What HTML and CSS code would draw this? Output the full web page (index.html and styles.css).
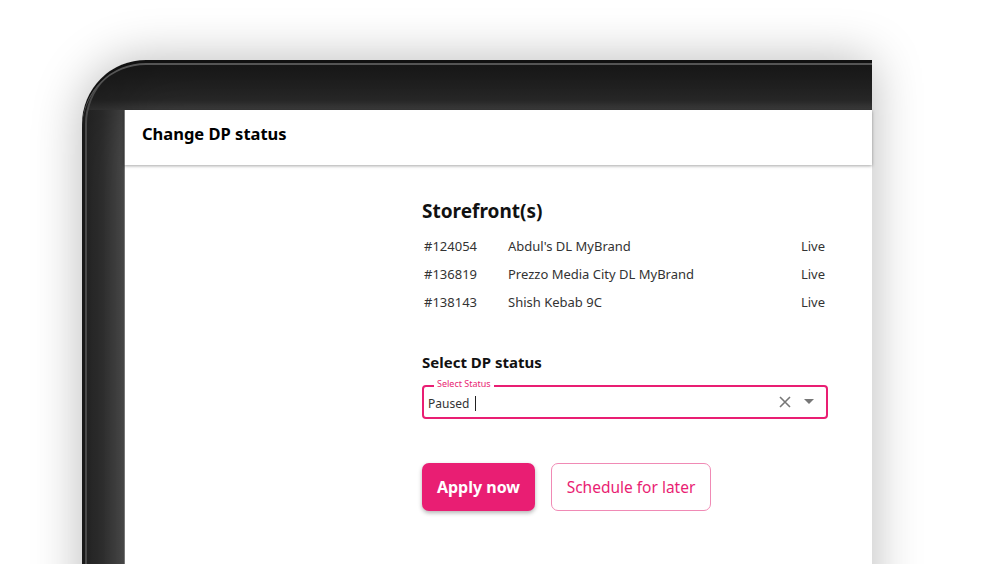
FILE: index.html
```html
<!DOCTYPE html>
<html>
<head>
<meta charset="utf-8">
<link rel="stylesheet" href="styles.css">
</head>
<body>
<div class="stage">
  <div class="device">
    <div class="screen">
      <div class="topbar"><h1 class="title">Change DP status</h1></div>
      <div class="content">
        <h2 class="section-title">Storefront(s)</h2>
        <div class="rows">
          <div class="row"><span class="id">#124054</span><span class="name">Abdul's DL MyBrand</span><span class="state">Live</span></div>
          <div class="row"><span class="id">#136819</span><span class="name">Prezzo Media City DL MyBrand</span><span class="state">Live</span></div>
          <div class="row"><span class="id">#138143</span><span class="name">Shish Kebab 9C</span><span class="state">Live</span></div>
        </div>
        <h3 class="select-title">Select DP status</h3>
        <div class="field">
          <span class="legend">Select Status</span>
          <span class="value">Paused</span><span class="caret"></span>
          <span class="icons">
            <svg class="clear" width="14" height="14" viewBox="0 0 14 14"><path d="M2 2L12 12M12 2L2 12" stroke="#777" stroke-width="1.6" fill="none"/></svg>
            <svg class="arrow" width="10" height="6" viewBox="0 0 10 6"><path d="M0 0H10L5 5Z" fill="#777"/></svg>
          </span>
        </div>
        <div class="actions">
          <button class="btn primary">Apply now</button>
          <button class="btn secondary">Schedule for later</button>
        </div>
      </div>
    </div>
  </div>
</div>
</body>
</html>
```
FILE: styles.css
```css
* { box-sizing: border-box; }
html, body { margin: 0; padding: 0; background: #fff; }
body { font-family: "Noto Sans", "Open Sans", sans-serif; color: #222; }
.stage {
  width: 982px; height: 564px; overflow: hidden;
  padding: 60px 0 0 82px;
}
.device {
  width: 790px; height: 560px;
  border-radius: 64px 0 0 0;
  background: #2c2c2c;
  padding: 50px 0 0 42px;
  box-shadow: 0 0 50px rgba(0,0,0,0.28), inset 0 3px 0 #111, inset 0 5px 0 #555, inset 3px 0 0 #1a1a1a, inset 5px 0 0 #4a4a4a, inset 30px 40px 40px -10px rgba(0,0,0,0.25);
  background-image: linear-gradient(to bottom, #1c1c1c 0px, #2a2a2a 40px, #3d3d3d 50px, transparent 50px), linear-gradient(to right, #2a2a2a 0px, #333 20px, #4a4a4a 42px);
}
.screen {
  background: #fff; height: 100%;
  box-shadow: inset 1px 0 0 #777;
}
.topbar {
  height: 55px; padding-left: 18px; padding-bottom: 9px;
  display: flex; align-items: center;
  box-shadow: 0 1px 3px rgba(0,0,0,0.35);
  position: relative;
}
.title { margin: 0; font-size: 16.5px; font-weight: 700; color: #000; }
.content { padding: 33px 0 0 298px; width: 704px; }
.section-title { margin: 0 0 8px; font-size: 19px; font-weight: 700; color: #111; }
.rows { display: flex; flex-direction: column; }
.row { display: flex; height: 28px; align-items: center; font-size: 13px; color: #333; padding-left: 2px; }
.id { width: 84px; }
.name { flex: 1; }
.state { margin-right: 3px; }
.select-title { margin: 36px 0 13px; font-size: 15px; font-weight: 700; color: #111; }
.field {
  position: relative; height: 34px;
  border: 2px solid #e91e73; border-radius: 4px;
  display: flex; align-items: center; padding-left: 4px; padding-top: 3px;
}
.legend {
  position: absolute; left: 10px; top: -9px;
  background: #fff; padding: 0 3px;
  font-size: 9px; color: #e91e73; line-height: 12px;
}
.value { font-size: 12px; color: #333; }
.caret { width: 1px; height: 15px; background: #222; margin-left: 6px; }
.icons { margin-left: auto; display: flex; align-items: center; gap: 12px; padding-right: 12px; padding-bottom: 3px; }
.actions { display: flex; gap: 16px; margin-top: 44px; }
.btn {
  font-family: inherit; height: 48px; border-radius: 7px; cursor: pointer;
}
.primary {
  background: #e91e73; color: #fff; border: none; font-weight: 700; width: 113px; font-size: 16px;
  box-shadow: 0 2px 4px rgba(0,0,0,0.3);
}
.secondary {
  background: #fff; color: #e91e73; border: 1px solid #f08ab5; width: 160px; font-size: 15.5px;
}
```
